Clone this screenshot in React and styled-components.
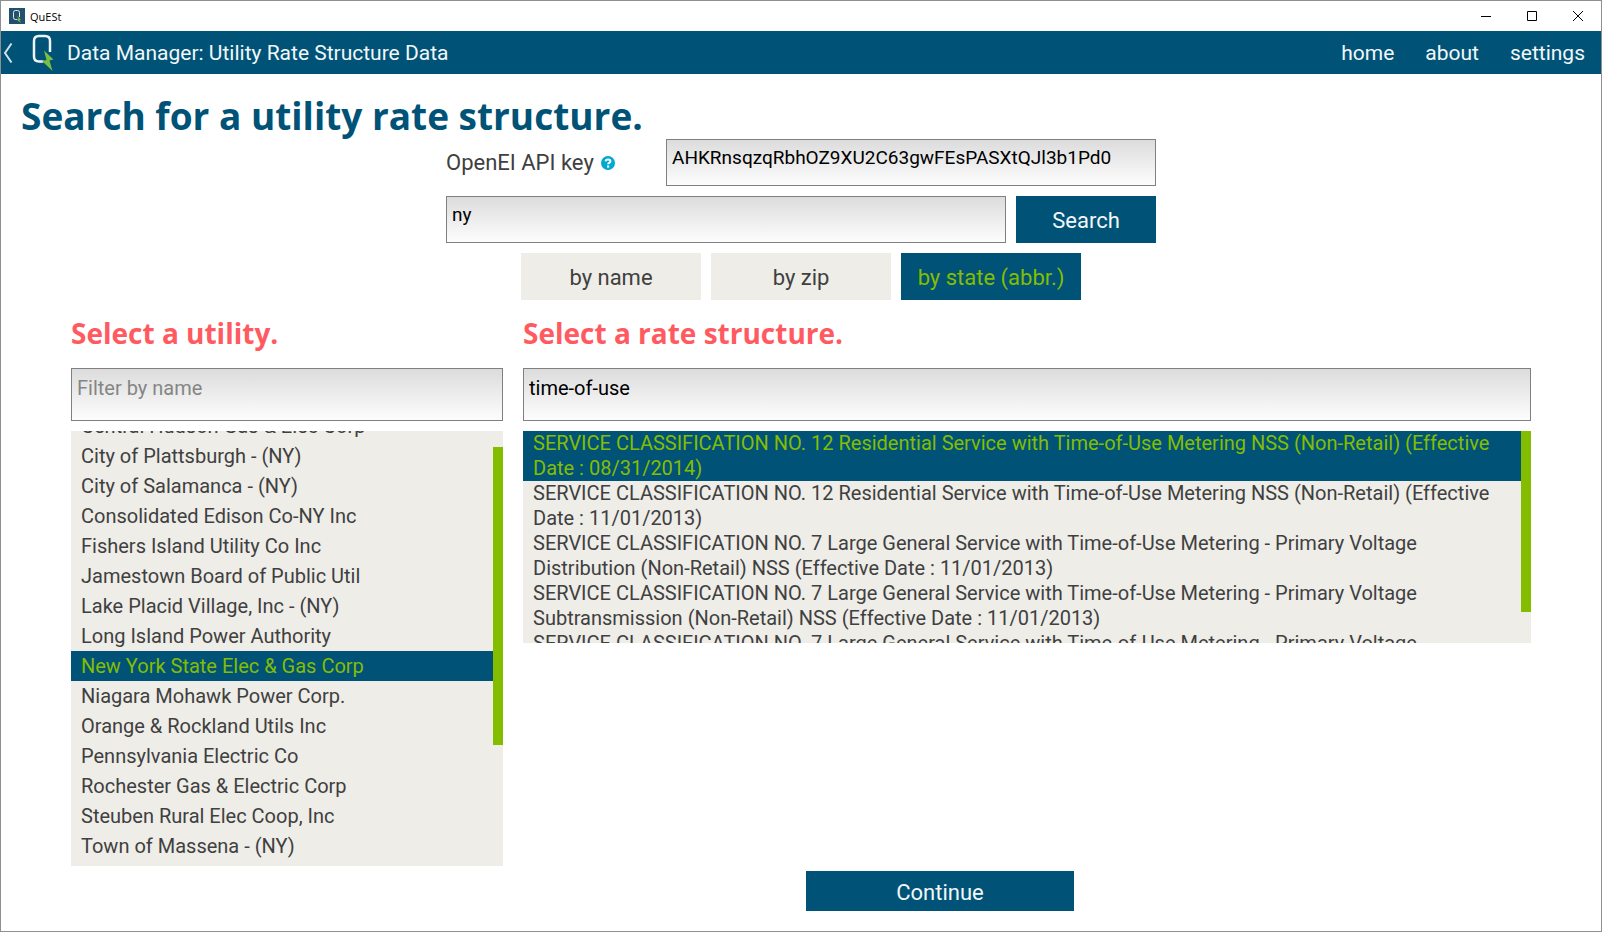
import React, { useLayoutEffect, useRef, useState } from "react";
import styled, { createGlobalStyle } from "styled-components";

const navy = "#005377";
const green = "#84bd00";
const sand = "#eeede8";
const ink = "#404040";
const coral = "#ff5a5f";

const GlobalStyle = createGlobalStyle`
  * { box-sizing: border-box; }
  body { margin: 0; background: #fff; color: ${ink}; font-family: Roboto, sans-serif; font-size: 20px; }
  button, input { font: inherit; color: inherit; margin: 0; border: 0; border-radius: 0; }
  button { cursor: pointer; padding: 0; }
  h1, h2, ul { margin: 0; padding: 0; }
`;

const Window = styled.div`
  display: flex;
  flex-direction: column;
  height: 100vh;
  min-height: 760px;
  border: 1px solid #8f8f8f;
`;

const TitleBar = styled.header`
  display: flex;
  align-items: center;
  flex: none;
  height: 30px;
  padding-left: 8px;
  color: #000;
  font-family: "Open Sans", sans-serif;
  font-size: 11px;
`;

const AppName = styled.span`
  flex: 1;
  padding-left: 5px;
`;

const WindowButton = styled.button`
  display: grid;
  place-items: center;
  width: 46px;
  height: 28px;
  background: none;
`;

const NavBar = styled.nav`
  display: flex;
  align-items: center;
  flex: none;
  height: 43px;
  padding-right: 16px;
  background: ${navy};
  color: #f2f7f9;
  font-size: 21px;
`;

const BackButton = styled.button`
  display: flex;
  width: 30px;
  padding-left: 2px;
  background: none;
`;

const NavTitle = styled.span`
  flex: 1;
  padding-left: 12px;
`;

const NavLinks = styled.div`
  display: flex;
  gap: 31px;
`;

const NavLink = styled.a`
  color: inherit;
  text-decoration: none;
`;

const Main = styled.main`
  display: flex;
  flex-direction: column;
  flex: 1;
  min-height: 0;
  padding: 20px 0;
`;

const PageTitle = styled.h1`
  padding: 0 20px 2px;
  color: ${navy};
  font: bold 37px/43px "Open Sans", sans-serif;
`;

const SearchForm = styled.form`
  display: flex;
  flex-direction: column;
  gap: 10px;
  width: 710px;
  margin: 0 auto;
`;

const FormRow = styled.div`
  display: flex;
  justify-content: ${(p) => (p.$centered ? "center" : "space-between")};
  gap: 10px;
  height: 47px;
`;

const KeyLabel = styled.div`
  display: flex;
  align-items: center;
  gap: 7px;
  font-size: 22px;
`;

const HelpButton = styled.button`
  display: flex;
  background: none;
`;

const TextBox = styled.input`
  flex: none;
  width: ${(p) => p.$width || "100%"};
  height: ${(p) => (p.$tall ? 53 : 47)}px;
  padding: 5px 5px ${(p) => (p.$tall ? 19 : 15)}px;
  border: 1px solid #808080;
  background: linear-gradient(#dcdcdc, #fdfdfd);
  color: #000;
  font-size: ${(p) => (p.$tall ? 20 : 19)}px;
  outline: none;
  &::placeholder { color: #858585; opacity: 1; }
`;

const ActionButton = styled.button`
  flex: none;
  width: ${(p) => p.$width};
  height: ${(p) => p.$height || "47px"};
  padding-top: 2px;
  background: ${navy};
  color: #f2f7f9;
  font-size: 22px;
`;

const ModeButton = styled.button`
  width: 180px;
  padding-top: 2px;
  background: ${(p) => (p.$active ? navy : sand)};
  color: ${(p) => (p.$active ? green : ink)};
  font-size: 22px;
`;

const Panels = styled.div`
  display: grid;
  grid-template-columns: 3fr 7fr;
  gap: 20px;
  flex: 1;
  min-height: 0;
  padding: 10px 70px 0;
`;

const Panel = styled.section`
  display: flex;
  flex-direction: column;
  gap: 10px;
  min-width: 0;
  min-height: 0;
`;

const PanelTitle = styled.h2`
  padding-bottom: 2px;
  color: ${coral};
  font: bold 28px/46px "Open Sans", sans-serif;
`;

const ListFrame = styled.div`
  display: flex;
  flex: ${(p) => (p.$fill ? "1 1 0" : "0 0 212px")};
  min-height: 0;
  background: ${sand};
`;

const List = styled.ul`
  flex: 1;
  height: 100%;
  padding-bottom: ${(p) => (p.$fill ? 5 : 0)}px;
  overflow: auto;
  scrollbar-width: none;
  list-style: none;
`;

const Option = styled.button`
  display: block;
  width: 100%;
  padding: 0 10px;
  background: ${(p) => (p.$active ? navy : "transparent")};
  color: ${(p) => (p.$active ? green : ink)};
  line-height: ${(p) => p.$line};
  text-align: left;
`;

const ScrollThumb = styled.div`
  flex: none;
  width: 10px;
  height: ${(p) => p.$length};
  margin-top: ${(p) => p.$start};
  background: ${green};
`;

const Footer = styled.footer`
  display: grid;
  grid-template-columns: 1fr 1fr;
  column-gap: 10px;
  padding-top: 5px;
`;

const FooterAction = styled.div`
  grid-column: 2;
`;

const utilities = [
  "Central Hudson Gas & Elec Corp",
  "City of Plattsburgh - (NY)",
  "City of Salamanca - (NY)",
  "Consolidated Edison Co-NY Inc",
  "Fishers Island Utility Co Inc",
  "Jamestown Board of Public Util",
  "Lake Placid Village, Inc - (NY)",
  "Long Island Power Authority",
  "New York State Elec & Gas Corp",
  "Niagara Mohawk Power Corp.",
  "Orange & Rockland Utils Inc",
  "Pennsylvania Electric Co",
  "Rochester Gas & Electric Corp",
  "Steuben Rural Elec Coop, Inc",
  "Town of Massena - (NY)",
];

const rates = [
  "SERVICE CLASSIFICATION NO. 12 Residential Service with Time-of-Use Metering NSS (Non-Retail) (Effective Date : 08/31/2014)",
  "SERVICE CLASSIFICATION NO. 12 Residential Service with Time-of-Use Metering NSS (Non-Retail) (Effective Date : 11/01/2013)",
  "SERVICE CLASSIFICATION NO. 7 Large General Service with Time-of-Use Metering - Primary Voltage Distribution (Non-Retail) NSS (Effective Date : 11/01/2013)",
  "SERVICE CLASSIFICATION NO. 7 Large General Service with Time-of-Use Metering - Primary Voltage Subtransmission (Non-Retail) NSS (Effective Date : 11/01/2013)",
  "SERVICE CLASSIFICATION NO. 7 Large General Service with Time-of-Use Metering - Primary Voltage",
];

const modes = ["by name", "by zip", "by state (abbr.)"];

function QuestMark({ width, height }) {
  return (
    <svg width={width} height={height} viewBox="0 0 21 37" aria-hidden="true">
      <path
        d="M11 27.500H6.500Q1.500 27.500 1.500 22.500V7Q1.500 2 6.500 2H12.500Q17.500 2 17.500 7V18"
        fill="none"
        stroke="#eef4f6"
        strokeWidth="2.500"
      />
      <path d="M11.500 16.500L21 25.500L17 26.500L20 37L9.500 27L14 26Z" fill="#78be43" />
    </svg>
  );
}

function AppIcon() {
  return (
    <svg width="16" height="16" viewBox="0 0 16 16" aria-hidden="true">
      <path d="M0 0H16V16H0Z" fill="#24506f" />
      <path d="M8 11.500H6.500Q4.500 11.500 4.500 9.500V4.500Q4.500 2.500 6.500 2.500H8.500Q10.500 2.500 10.500 4.500V9" fill="none" stroke="#e4edf2" />
      <path d="M8 8L12 11.500L10.500 12L12 15L7.500 11.500L9.500 11Z" fill="#78be43" />
    </svg>
  );
}

function ScrollList({ items, selected, onSelect, fill, line, start, length, label }) {
  const list = useRef(null);
  useLayoutEffect(() => {
    if (fill) list.current.scrollTop = list.current.scrollHeight;
  }, [fill]);
  return (
    <ListFrame $fill={fill}>
      <List ref={list} $fill={fill} aria-label={label}>
        {items.map((item) => (
          <li key={item}>
            <Option type="button" $line={line} $active={item === selected} onClick={() => onSelect(item)}>
              {item}
            </Option>
          </li>
        ))}
      </List>
      <ScrollThumb $start={start} $length={length} />
    </ListFrame>
  );
}

export default function App() {
  const [mode, setMode] = useState(modes[2]);
  const [utility, setUtility] = useState(utilities[8]);
  const [rate, setRate] = useState(rates[0]);

  return (
    <>
      <GlobalStyle />
      <Window>
        <TitleBar>
          <AppIcon />
          <AppName>QuESt</AppName>
          <WindowButton type="button" aria-label="Minimize">
            <svg width="10" height="10"><path d="M0 5.500H10" stroke="#000" /></svg>
          </WindowButton>
          <WindowButton type="button" aria-label="Maximize">
            <svg width="10" height="10"><path d="M.5 .5H9.500V9.500H.5Z" fill="none" stroke="#000" /></svg>
          </WindowButton>
          <WindowButton type="button" aria-label="Close">
            <svg width="10" height="10"><path d="M0 0L10 10M10 0L0 10" stroke="#000" /></svg>
          </WindowButton>
        </TitleBar>

        <NavBar>
          <BackButton type="button" aria-label="Back">
            <svg width="10" height="22"><path d="M8.500 1.500L2 11L8.500 20.500" fill="none" stroke="#d5e3e9" strokeWidth="2" /></svg>
          </BackButton>
          <QuestMark width={24} height={37} />
          <NavTitle>Data Manager: Utility Rate Structure Data</NavTitle>
          <NavLinks>
            <NavLink href="#home">home</NavLink>
            <NavLink href="#about">about</NavLink>
            <NavLink href="#settings">settings</NavLink>
          </NavLinks>
        </NavBar>

        <Main>
          <PageTitle>Search for a utility rate structure.</PageTitle>
          <SearchForm onSubmit={(e) => e.preventDefault()}>
            <FormRow>
              <KeyLabel>
                <label htmlFor="api-key">OpenEI API key</label>
                <HelpButton type="button" aria-label="Help">
                  <svg width="14" height="14" viewBox="0 0 14 14">
                    <circle cx="7" cy="7" r="7" fill="#00a9d0" />
                    <path d="M4.600 5.300Q4.800 3.400 7 3.400Q9.400 3.400 9.400 5.200Q9.400 6.300 8.200 6.800Q7.100 7.300 7.100 8.300" fill="none" stroke="#fff" strokeWidth="2" />
                    <path d="M6 9.500H8.200V11.600H6Z" fill="#fff" />
                  </svg>
                </HelpButton>
              </KeyLabel>
              <TextBox id="api-key" $width="490px" defaultValue="AHKRnsqzqRbhOZ9XU2C63gwFEsPASXtQJl3b1Pd0" />
            </FormRow>
            <FormRow>
              <TextBox $width="560px" aria-label="Search term" defaultValue="ny" />
              <ActionButton $width="140px">Search</ActionButton>
            </FormRow>
            <FormRow $centered>
              {modes.map((m) => (
                <ModeButton key={m} type="button" $active={m === mode} onClick={() => setMode(m)}>
                  {m}
                </ModeButton>
              ))}
            </FormRow>
          </SearchForm>

          <Panels>
            <Panel>
              <PanelTitle>Select a utility.</PanelTitle>
              <TextBox $tall placeholder="Filter by name" aria-label="Filter utilities by name" />
              <ScrollList
                fill
                label="Utilities"
                items={utilities}
                selected={utility}
                onSelect={setUtility}
                line="30px"
                start="16px"
                length="298px"
              />
            </Panel>
            <Panel>
              <PanelTitle>Select a rate structure.</PanelTitle>
              <TextBox $tall defaultValue="time-of-use" aria-label="Filter rate structures" />
              <ScrollList
                label="Rate structures"
                items={rates}
                selected={rate}
                onSelect={setRate}
                line="25px"
                start="0px"
                length="181px"
              />
            </Panel>
          </Panels>

          <Footer>
            <FooterAction>
              <ActionButton type="button" $width="268px" $height="40px">Continue</ActionButton>
            </FooterAction>
          </Footer>
        </Main>
      </Window>
    </>
  );
}
